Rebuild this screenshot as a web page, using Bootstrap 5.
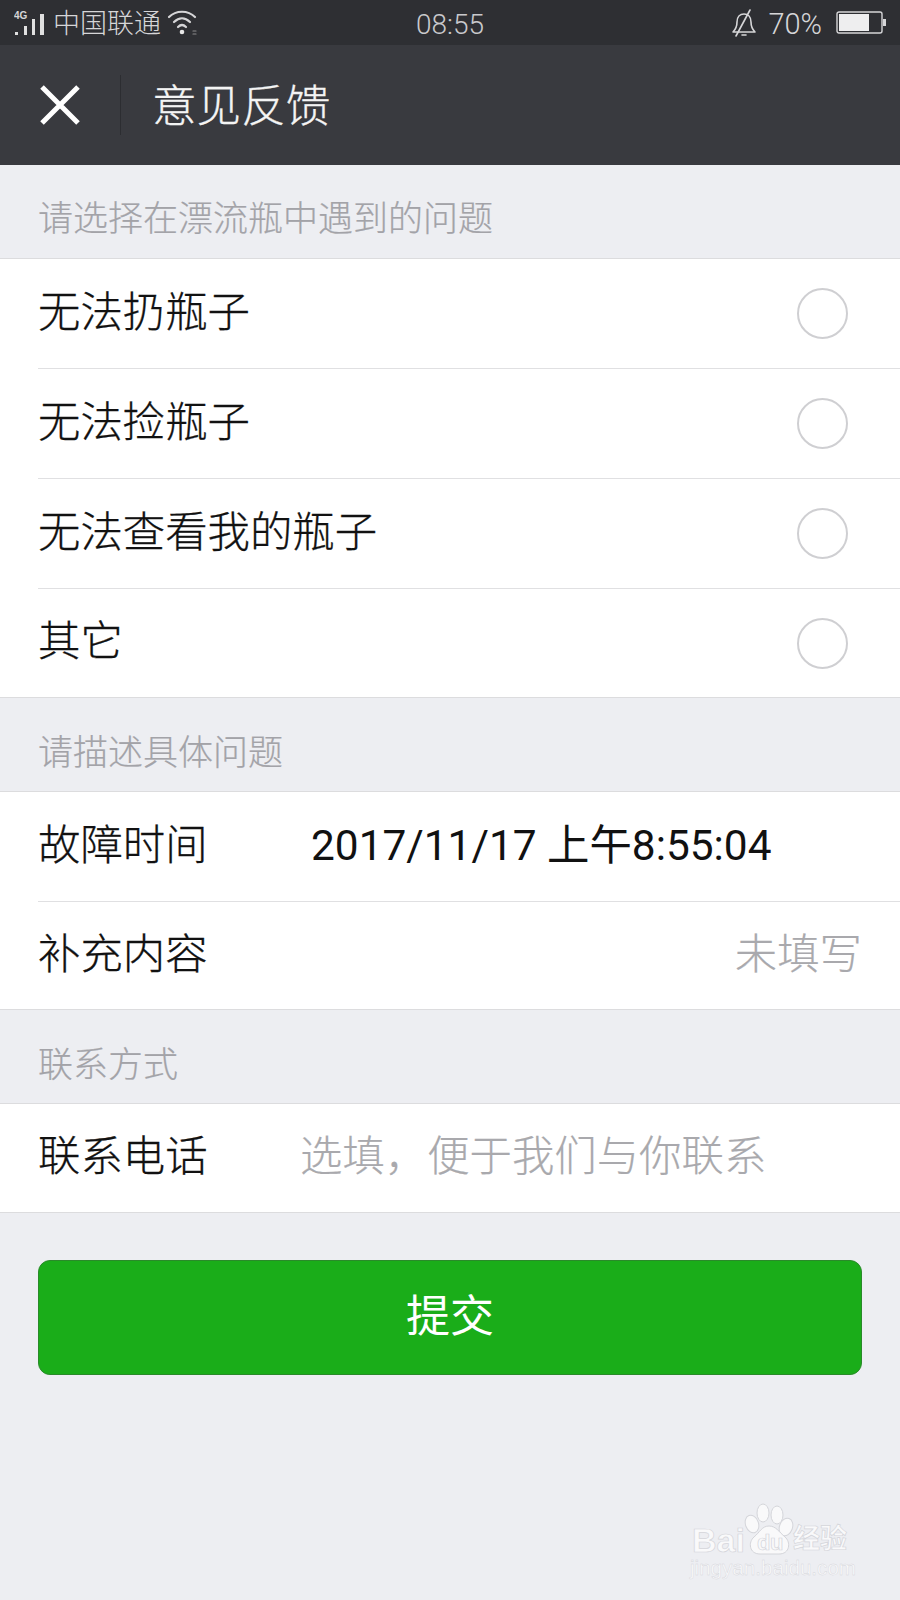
<!DOCTYPE html>
<html lang="zh-CN">
<head>
<meta charset="utf-8">
<title>意见反馈</title>
<link rel="stylesheet" href="https://cdn.jsdelivr.net/npm/bootstrap@5.3.0/dist/css/bootstrap.min.css">
<style>
html,body{height:1600px;overflow:hidden}
body{background:#edeef2;font-family:"Liberation Sans","Noto Sans CJK SC",sans-serif;color:#111;width:900px}
.phone{height:1600px;position:relative}
.statusbar{height:45px;background:#2e2f33;color:#d6d6d8;font-size:27px;line-height:1;padding:0 14px 0 14px}
.statusbar .st-side{flex:1 1 0}
.carrier{font-size:27px;margin-left:7px;margin-right:6px;margin-top:4px;font-weight:300}
.clock{font-family:Roboto,"Liberation Sans",sans-serif;font-size:28px;color:#c9c9cc;margin-top:4px;font-weight:300}
.pct{font-family:Roboto,"Liberation Sans",sans-serif;font-size:29px;margin:4px 14px 0 11px;font-weight:300}
.appbar{height:120px;background:#393a3f;color:#fff}
.closebox{width:120px;padding-left:39px}
.vsep{width:1px;height:60px;background:#2c2d31}
.apptitle{font-size:44.6px;margin-left:31px;line-height:1;color:#f4f4f4;margin-top:5px;font-weight:300;-webkit-text-stroke:.3px #f4f4f4}
.sect{height:93px;padding:36px 38px 0;font-size:35px;color:#a3a3a8;line-height:1;font-weight:300;-webkit-text-stroke:.2px #a3a3a8}
.sect.thin{padding-top:37px}
.group{background:#fff;border-top:1px solid #dcdcde;border-bottom:1px solid #dcdcde}
.rowline{height:110px;margin-left:38px;padding-right:38px;font-size:42.4px;line-height:1;border-bottom:1px solid #e0e0e2;padding-bottom:1px;font-weight:300;-webkit-text-stroke:.3px #111}
.rowline:last-child{border-bottom:0;height:108px}
.group.tight .rowline:last-child{height:107px}
.ring{width:51px;height:51px;border-radius:50%;border:2px solid #cfcfd2;margin-right:14px;flex:none;margin-bottom:-1px}
.lbl{width:262px;flex:none}
.val{font-family:Roboto,"Liberation Sans","Noto Sans CJK SC",sans-serif;font-size:42.4px;margin-left:11px;font-weight:400;-webkit-text-stroke:0}
.ph{color:#a9a9ad;-webkit-text-stroke:.2px #a9a9ad}
.submitbtn{display:block;width:824px;height:115px;margin:47px 0 0 38px;background:#1aad19;border:1px solid #2a8a2a;border-radius:12px;color:#fff;font-size:44px;padding:0 0 2px}
.submitbtn:hover{background:#1aad19;color:#fff}
.wm{position:absolute;left:690px;top:1500px;width:170px;height:90px}
.wm svg{position:absolute;left:0;top:0}
.wm-bai,.wm-du,.wm-cn,.wm-url{position:absolute;color:#f9f9fa;line-height:1;-webkit-text-stroke:.7px #d4d5da}
.wm-bai{left:2px;top:23px;font-size:34px;font-weight:700}
.wm-du{left:67px;top:32px;font-size:22px;font-weight:700;letter-spacing:-.5px}
.wm-cn{left:103px;top:26px;font-size:27px;font-weight:700}
.wm-url{left:0;top:58px;font-size:20.6px;font-weight:400;-webkit-text-stroke:.4px #d4d5da}
</style>
</head>
<body>
<div class="phone">
  <div class="statusbar d-flex align-items-center">
    <div class="st-side d-flex align-items-center">
      <svg width="32" height="30" viewBox="0 0 32 30"><text x="0" y="11" font-family="Liberation Sans" font-size="10" font-weight="700" fill="#d6d6d8">4G</text><rect x="1" y="24" width="3" height="3" fill="#e0e0e0"/><rect x="10" y="18" width="3" height="9" fill="#e0e0e0"/><rect x="18" y="11" width="3" height="16" fill="#e0e0e0"/><rect x="26" y="6" width="4" height="21" fill="#e0e0e0"/></svg>
      <span class="carrier">中国联通</span>
      <svg width="32" height="28" viewBox="0 0 32 28" fill="none" stroke="#d6d6d8" stroke-width="2.2" stroke-linecap="round"><path d="M2 8C9 1 21 1 28 8"/><path d="M7 13C12 8 18 8 23 13"/><path d="M11 18c2.500-2.500 5.500-2.500 8 0"/><circle cx="15" cy="23" r="2.300" fill="#e8e8e8" stroke="none"/><path d="M26 22h3M26 25h3" stroke-width="1.2" stroke="#8a8a8c"/></svg>
    </div>
    <div class="clock">08:55</div>
    <div class="st-side d-flex align-items-center justify-content-end">
      <svg width="26" height="28" viewBox="0 0 26 28" fill="none" stroke="#d6d6d8" stroke-width="1.6" stroke-linecap="round" stroke-linejoin="round"><path d="M2 23c3-3 4-5 4-10 0-5 3-8 7-8s7 3 7 8c0 5 1 7 4 10z"/><path d="M11 26h4"/><path d="M5 27L19 1"/></svg>
      <span class="pct">70%</span>
      <svg width="50" height="24" viewBox="0 0 50 24"><rect x="1" y="1" width="45" height="21" rx="2" fill="none" stroke="#d6d6d8" stroke-width="1.4"/><rect x="3" y="3" width="30" height="17" fill="#eeeeef"/><rect x="47" y="8" width="3" height="7" fill="#d6d6d8"/></svg>
    </div>
  </div>
  <div class="appbar d-flex align-items-center">
    <div class="closebox d-flex align-items-center">
      <svg width="42" height="42" viewBox="0 0 42 42" stroke="#fff" stroke-width="5"><path d="M3 3L39 39M39 3L3 39"/></svg>
    </div>
    <div class="vsep"></div>
    <div class="apptitle">意见反馈</div>
  </div>
  <div class="sect">请选择在漂流瓶中遇到的问题</div>
  <div class="group">
    <div class="rowline d-flex align-items-center justify-content-between"><span>无法扔瓶子</span><span class="ring"></span></div>
    <div class="rowline d-flex align-items-center justify-content-between"><span>无法捡瓶子</span><span class="ring"></span></div>
    <div class="rowline d-flex align-items-center justify-content-between"><span>无法查看我的瓶子</span><span class="ring"></span></div>
    <div class="rowline d-flex align-items-center justify-content-between"><span>其它</span><span class="ring"></span></div>
  </div>
  <div class="sect thin">请描述具体问题</div>
  <div class="group tight">
    <div class="rowline d-flex align-items-center"><span class="lbl">故障时间</span><span class="val">2017/11/17 上午8:55:04</span></div>
    <div class="rowline d-flex align-items-center justify-content-between"><span>补充内容</span><span class="ph">未填写</span></div>
  </div>
  <div class="sect thin">联系方式</div>
  <div class="group">
    <div class="rowline d-flex align-items-center"><span class="lbl">联系电话</span><span class="ph">选填，便于我们与你联系</span></div>
  </div>
  <button type="button" class="btn submitbtn">提交</button>
  <div class="wm">
    <svg width="170" height="70" viewBox="0 0 170 70" fill="#f9f9fa" stroke="#d4d5da" stroke-width="1"><ellipse cx="62" cy="24" rx="6.500" ry="9" transform="rotate(-20 62 24)"/><ellipse cx="73" cy="13" rx="6" ry="9"/><ellipse cx="87" cy="15" rx="6" ry="9"/><ellipse cx="96" cy="27" rx="6.500" ry="9" transform="rotate(20 96 27)"/><path d="M79 26c-7 0-9 6-15 11-6 5-5 17 6 17h19c11 0 12-12 6-17-6-5-9-11-16-11z"/></svg>
    <span class="wm-bai">Bai</span><span class="wm-du">du</span><span class="wm-cn">经验</span><span class="wm-url">jingyan.baidu.com</span>
  </div>
</div>
</body>
</html>
